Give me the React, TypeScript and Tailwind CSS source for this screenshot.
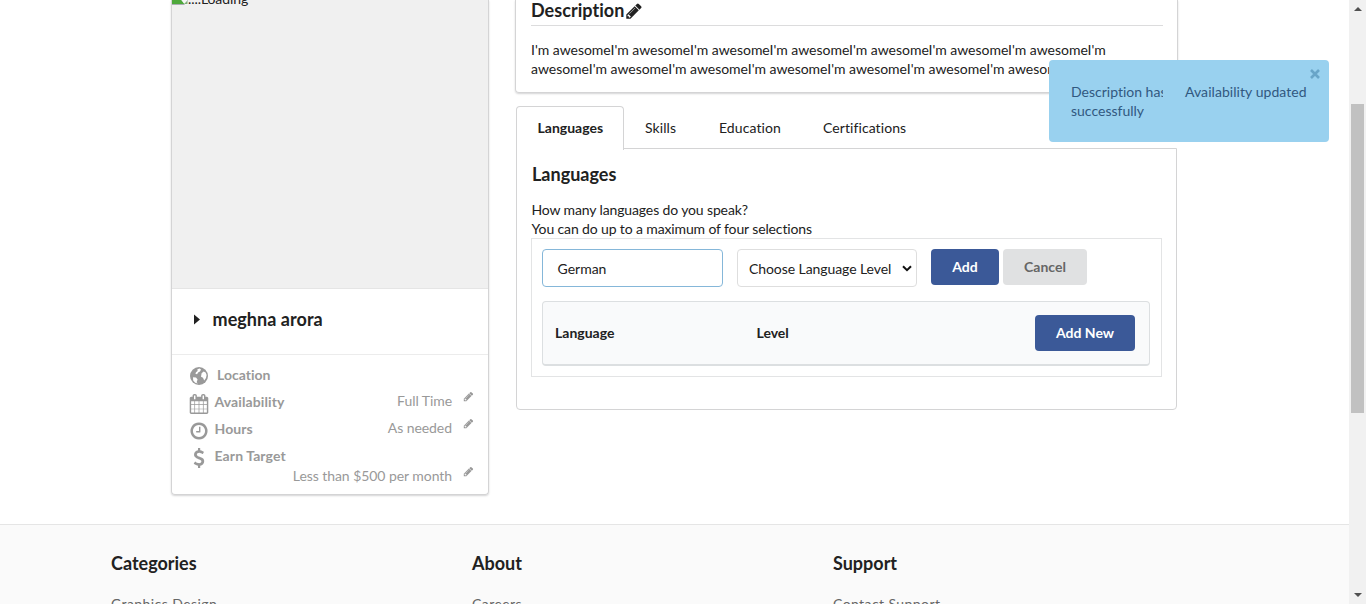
import React from "react";

const PENCIL =
  "M491 1536l91-91-235-235-91 91v107h128v128h107zm523-928q0-22-22-22-10 0-17 7l-542 542q-7 7-7 17 0 22 22 22 10 0 17-7l542-542q7-7 7-17zm-54-192l416 416-832 832h-416v-416zm683 96q0 53-37 90l-166 166-416-416 166-165q36-38 90-38 53 0 91 38l235 234q37 39 37 91z";
const CALENDAR =
  "M192 1664h288v-288h-288v288zm352 0h320v-288h-320v288zm-352-352h288v-320h-288v320zm352 0h320v-320h-320v320zm-352-384h288v-288h-288v288zm736 736h320v-288h-320v288zm-384-736h320v-288h-320v288zm768 736h288v-288h-288v288zm-384-352h320v-320h-320v320zm-352-864v-288q0-13-9.5-22.5t-22.5-9.5h-64q-13 0-22.5 9.5t-9.5 22.5v288q0 13 9.5 22.5t22.5 9.5h64q13 0 22.5-9.5t9.5-22.5zm736 864h288v-320h-288v320zm-384-384h320v-288h-320v288zm384 0h288v-288h-288v288zm32-480v-288q0-13-9.5-22.5t-22.5-9.5h-64q-13 0-22.5 9.5t-9.5 22.5v288q0 13 9.5 22.5t22.5 9.5h64q13 0 22.5-9.5t9.5-22.5zm384-64v1280q0 52-38 90t-90 38h-1408q-52 0-90-38t-38-90v-1280q0-52 38-90t90-38h128v-96q0-66 47-113t113-47h64q66 0 113 47t47 113v96h384v-96q0-66 47-113t113-47h64q66 0 113 47t47 113v96h128q52 0 90 38t38 90z";
const CLOCK =
  "M1024 544v448q0 14-9 23t-23 9h-320q-14 0-23-9t-9-23v-64q0-14 9-23t23-9h224v-352q0-14 9-23t23-9h64q14 0 23 9t9 23zm416 352q0-148-73-273t-198-198-273-73-273 73-198 198-73 273 73 273 198 198 273 73 273-73 198-198 73-273zm224 0q0 209-103 385.5t-279.5 279.5-385.5 103-385.5-103-279.5-279.5-103-385.5 103-385.5 279.5-279.5 385.5-103 385.5 103 279.5 279.5 103 385.5z";
const DOLLAR =
  "M1362 1185q0 153-99.5 263.5t-258.5 136.5v175q0 14-9 23t-23 9h-135q-13 0-22.5-9.5t-9.5-22.5v-175q-66-9-127.5-31t-101.5-44.5-74-48-46.5-37.5-17.5-18q-17-21-2-41l103-135q7-10 23-12 15-2 24 9l2 2q113 99 243 125 37 8 74 8 81 0 142.5-43t61.5-122q0-28-15-53t-33.5-42-58.5-37.5-66-32-80-32.5q-39-16-61.5-25t-61.5-26.5-62.5-31-56.5-35.5-53.5-42.5-43.5-49-35.5-58-21-66.5-8.5-78q0-138 98-242t255-134v-180q0-13 9.5-22.5t22.5-9.5h135q14 0 23 9t9 23v176q57 6 110.5 23t87 33.5 63.5 37.5 39 29 15 14q17 18 5 38l-81 146q-8 15-23 16-14 3-27-7-3-3-14.5-12t-39-26.5-58.5-32-74.5-26-85.5-11.5q-95 0-155 43t-60 111q0 26 8.5 48t29.5 41.5 39.5 33 56 31 60.5 27 70 27.5q53 20 81 31.5t76 35 75.5 42.5 62 50 53 63.5 31.5 76.5 13 94z";

function Glyph({ d, className }: { d: string; className: string }) {
  return (
    <svg viewBox="0 0 1792 1792" className={`shrink-0 ${className}`} fill="currentColor">
      <path d={d} />
    </svg>
  );
}

function Globe() {
  return (
    <svg viewBox="0 0 18 18" className="size-[18px] shrink-0">
      <circle cx="9" cy="9" r="9" fill="#999" />
      <path
        d="M7.4 2.2 9.6 1.5 11 2.6 10 4.4 8.4 5.2 7 7.2 5.4 6.8 6 5.2 7.6 4zM11.6 6.2 13.6 4.6l2 .8 1 2.6-.6 3-1.8 2.4-1.2-2.6-2-1zM3 10.2l3 .4 1.6 2-1 2.6L8 16.6 5.2 15.8 3.2 13.4z"
        fill="#fff"
      />
    </svg>
  );
}

function BrokenImage() {
  return (
    <svg viewBox="0 0 16 16" className="size-4 shrink-0">
      <path d="M0 0h16v16H0z" fill="#a8adb2" />
      <path d="M1 0h14v15H1z" fill="#dfeafc" />
      <path d="M0 15V8l4-3 9 10z" fill="#4ea83b" />
      <path d="M5 5l3-1 8 8v4h-3z" fill="#f4f6f4" />
      <path d="M12 15l3.500-3.500V15z" fill="#7fae78" />
    </svg>
  );
}

function Detail({
  icon,
  label,
  value,
  wide,
}: {
  icon: React.ReactNode;
  label: string;
  value?: string;
  wide?: boolean;
}) {
  return (
    <div className="flex h-[27px] pl-[16.5px] text-[#999]">
      <div className="flex w-5 justify-center pt-0.5">{icon}</div>
      <b className={wide ? "ml-[8.5px]" : "ml-1.5 tracking-[0.1px]"}>{label}</b>
      {value && <Value text={value} />}
    </div>
  );
}

function Value({ text }: { text: string }) {
  return (
    <div className="-mt-px mr-[14px] ml-auto flex text-[#999]">
      <span className="tracking-[-0.06px]">{text}</span>
      <Glyph d={PENCIL} className="ml-[11px] size-[11px]" />
    </div>
  );
}

function FooterColumn({ title, item }: { title: string; item: string }) {
  return (
    <div className="w-[361px]">
      <h4 className="text-[18px] leading-[23px] font-bold">{title}</h4>
      <p className="mt-[19px] tracking-[0.42px] text-[#666]">{item}</p>
    </div>
  );
}

export default function App() {
  return (
    <div className="relative flex h-[604px] overflow-hidden bg-white font-['Lato',sans-serif] text-[14px] leading-[19px] text-[#212121] [font-variant-ligatures:none]">
      <div className="flex min-w-0 flex-1 flex-col">
        <main className="flex h-[524px] shrink-0 items-start pl-[171px]">
          <aside className="h-[495px] w-[318px] rounded-b border border-t-0 border-[#d4d4d5] shadow-[0_1px_2px_#d4d4d5]">
            <div className="flex h-[289px] items-start overflow-hidden border-b border-[#e5e5e5] bg-[#f0f0f0]">
              <div className="-mt-[11px] flex">
                <BrokenImage />
                <span className="tracking-[-0.08px]">....Loading</span>
              </div>
            </div>
            <div className="flex h-[66px] items-center border-b border-[#ececec] pl-[22px]">
              <svg viewBox="0 0 6 10" className="mb-[5px] h-[11px] w-1.5">
                <path d="M0 0l6 5-6 5z" fill="#212121" />
              </svg>
              <h3 className="ml-[12.5px] pb-1 text-[18px] leading-[23px] font-bold tracking-[0.05px]">meghna arora</h3>
            </div>
            <div className="pt-[10px]">
              <Detail icon={<Globe />} label="Location" wide />
              <Detail icon={<Glyph d={CALENDAR} className="size-5" />} label="Availability" value="Full Time" />
              <Detail icon={<Glyph d={CLOCK} className="size-5" />} label="Hours" value="As needed" />
              <Detail icon={<Glyph d={DOLLAR} className="size-5" />} label="Earn Target" />
              <div className="-mt-[6px] flex">
                <Value text="Less than $500 per month" />
              </div>
            </div>
          </aside>

          <section className="ml-[26px] w-[663px]">
            <div className="h-[93px] rounded-b border border-t-0 border-[#d4d4d5] pr-[14px] pl-[15px] shadow-[0_1px_2px_#d4d4d5]">
              <div className="flex h-[26px] items-start border-b border-[#dcdcdd]">
                <h3 className="-mt-0.5 text-[18px] leading-[24px] font-bold tracking-[0.05px]">Description</h3>
                <Glyph d={PENCIL} className="mt-0.5 ml-px size-[18px]" />
              </div>
              <p className="pt-[14px] tracking-[-0.025px] whitespace-nowrap">
                I'm awesomeI'm awesomeI'm awesomeI'm awesomeI'm awesomeI'm awesomeI'm awesomeI'm
                <br />
                awesomeI'm awesomeI'm awesomeI'm awesomeI'm awesomeI'm awesomeI'm awesome
              </p>
            </div>

            <div className="mt-[13px] ml-px w-[661px]">
              <nav className="flex h-[43px] tracking-[0.08px]">
                <div className="z-10 -mb-px w-[108px] rounded-t border border-b-0 border-[#d4d4d5] bg-white pt-[11px] pl-[20.500px] font-bold tracking-normal">
                  Languages
                </div>
                <div className="w-[74px] pt-3 pl-[21px]">Skills</div>
                <div className="w-[104px] pt-3 pl-[21px]">Education</div>
                <div className="pt-3 pl-[21px]">Certifications</div>
              </nav>
              <div className="-mt-px h-[262px] rounded-b border border-[#d4d4d5] px-[14px] pt-[14px]">
                <h3 className="pl-px text-[18px] leading-[23px] font-bold">Languages</h3>
                <p className="mt-[14px] mb-px pl-[0.5px] tracking-[-0.13px]">
                  How many languages do you speak?
                  <br />
                  You can do up to a maximum of four selections
                </p>
                <div className="-mt-px h-[139px] w-[631px] border border-[#e3e4e5] p-[10px]">
                  <div className="flex">
                    <div className="h-[38px] w-[181px] rounded border border-[#85b7d9] pt-[9px] pl-[14.500px]">
                      German
                    </div>
                    <div className="ml-[14px] flex h-[38px] w-[180px] rounded border border-[#dedede] pt-[9px] pl-[11px] whitespace-nowrap">
                      <span className="w-[142px] tracking-[-0.08px]">Choose Language Level</span>
                      <svg viewBox="0 0 10 7" className="mt-[6px] ml-[11px] h-[7px] w-[10px]">
                        <path d="M1 1.2l4 4 4-4" fill="none" stroke="#111" strokeWidth="2" />
                      </svg>
                    </div>
                    <button className="ml-[14px] h-9 w-[68px] rounded bg-[#3b5998] pb-0.5 font-bold text-white">
                      Add
                    </button>
                    <button className="ml-1 h-9 w-[84px] rounded bg-[#e0e1e2] pb-0.5 font-bold text-[#666]">
                      Cancel
                    </button>
                  </div>
                  <div className="mt-[14px] flex h-[65px] w-[608px] items-center rounded border border-b-2 border-[#dcdfe1] bg-[#f9fafb] pr-[14px] pl-3 font-bold">
                    <span className="w-[201.500px] pb-0.5">Language</span>
                    <span className="pb-0.5">Level</span>
                    <button className="ml-auto h-9 w-[100px] rounded bg-[#3b5998] pb-0.5 font-bold text-white">
                      Add New
                    </button>
                  </div>
                </div>
              </div>
            </div>
          </section>
        </main>

        <footer className="flex h-20 shrink-0 border-t border-[#e5e5e5] bg-[#fafafa] pt-[27px] pl-[111px]">
          <FooterColumn title="Categories" item="Graphics Design" />
          <FooterColumn title="About" item="Careers" />
          <FooterColumn title="Support" item="Contact Support" />
        </footer>
      </div>

      <div className="flex w-[17px] shrink-0 flex-col items-center bg-[#f1f1f1]">
        <svg viewBox="0 0 8 4" className="mt-[7px] h-1 w-2">
          <path d="M0 4l4-4 4 4z" fill="#505050" />
        </svg>
        <div className="mt-[93px] h-[309px] w-[13px] bg-[#c1c1c1]" />
        <svg viewBox="0 0 8 4" className="mt-auto mb-[7px] h-1 w-2">
          <path d="M0 0l4 4 4-4z" fill="#505050" />
        </svg>
      </div>

      <div className="absolute top-[60px] left-[1049px] z-20 flex h-[82px] w-[280px] rounded bg-[#99d1ef] pt-[22px] pl-[22px] text-[#31587f]">
        <div className="w-[92px] overflow-hidden whitespace-nowrap">
          Description has
          <br />
          successfully
        </div>
        <div className="ml-[22px] tracking-[0.06px] whitespace-nowrap">Availability updated</div>
        <svg viewBox="0 0 10 10" className="absolute top-[9px] right-[9px] size-[10px]">
          <path d="M1 1l8 8M9 1L1 9" stroke="#69a5c8" strokeWidth="2.6" />
        </svg>
      </div>
    </div>
  );
}
